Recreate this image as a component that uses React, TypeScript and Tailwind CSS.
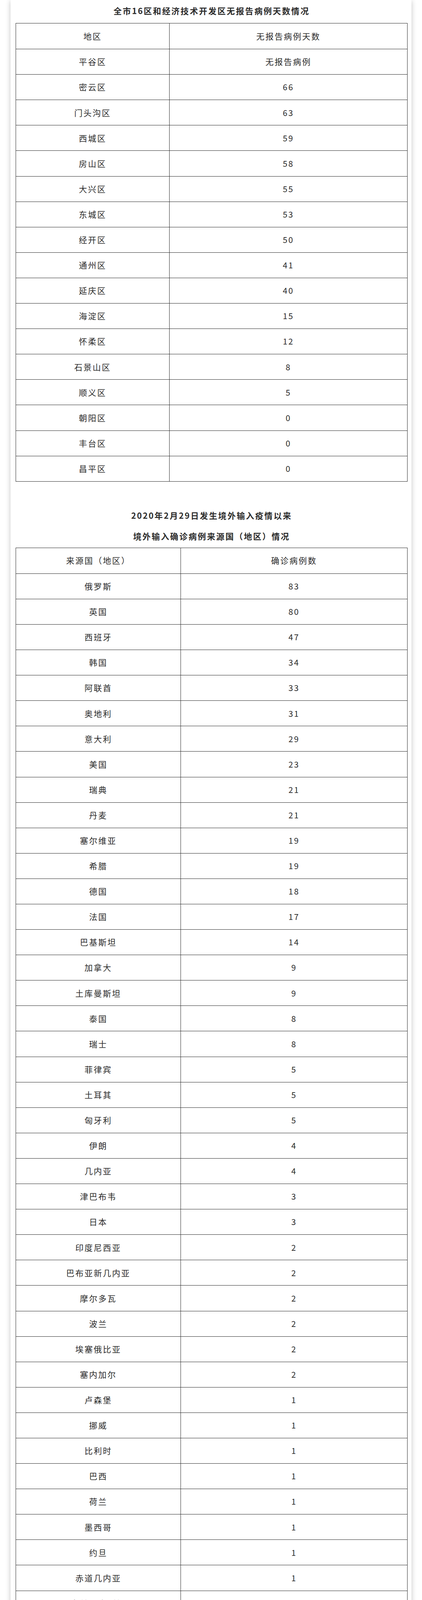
/**
 * Beijing district / imported case statistics page
 */

import React from 'react';

type Row = [string, string];

const districts: Array<Row> = [
    [`平谷区`, `无报告病例`],
    [`密云区`, `66`],
    [`门头沟区`, `63`],
    [`西城区`, `59`],
    [`房山区`, `58`],
    [`大兴区`, `55`],
    [`东城区`, `53`],
    [`经开区`, `50`],
    [`通州区`, `41`],
    [`延庆区`, `40`],
    [`海淀区`, `15`],
    [`怀柔区`, `12`],
    [`石景山区`, `8`],
    [`顺义区`, `5`],
    [`朝阳区`, `0`],
    [`丰台区`, `0`],
    [`昌平区`, `0`],
];

const sources: Array<Row> = [
    [`俄罗斯`, `83`],
    [`英国`, `80`],
    [`西班牙`, `47`],
    [`韩国`, `34`],
    [`阿联酋`, `33`],
    [`奥地利`, `31`],
    [`意大利`, `29`],
    [`美国`, `23`],
    [`瑞典`, `21`],
    [`丹麦`, `21`],
    [`塞尔维亚`, `19`],
    [`希腊`, `19`],
    [`德国`, `18`],
    [`法国`, `17`],
    [`巴基斯坦`, `14`],
    [`加拿大`, `9`],
    [`土库曼斯坦`, `9`],
    [`泰国`, `8`],
    [`瑞士`, `8`],
    [`菲律宾`, `5`],
    [`土耳其`, `5`],
    [`匈牙利`, `5`],
    [`伊朗`, `4`],
    [`几内亚`, `4`],
    [`津巴布韦`, `3`],
    [`日本`, `3`],
    [`印度尼西亚`, `2`],
    [`巴布亚新几内亚`, `2`],
    [`摩尔多瓦`, `2`],
    [`波兰`, `2`],
    [`埃塞俄比亚`, `2`],
    [`塞内加尔`, `2`],
    [`卢森堡`, `1`],
    [`挪威`, `1`],
    [`比利时`, `1`],
    [`巴西`, `1`],
    [`荷兰`, `1`],
    [`墨西哥`, `1`],
    [`约旦`, `1`],
    [`赤道几内亚`, `1`],
    [`乌兹别克斯坦`, `1`],
    [`新加坡`, `1`],
    [`塔吉克斯坦`, `1`],
    [`赞比亚`, `1`],
    [`伊拉克`, `1`],
    [`南非`, `1`],
    [`毛里求斯`, `1`],
    [`孟加拉国`, `1`],
    [`埃及`, `1`],
    [`喀麦隆`, `1`],
    [`刚果（金）`, `1`],
    [`塞浦路斯`, `1`],
    [`中国香港`, `274`],
    [`中国台湾`, `53`],
    [`合计`, `911`],
];

const notice = `请与官方公布的病例活动轨迹有交集人员，海南、西藏、新疆等风险地区进返京人员，接到电话、短信、健康宝弹窗、健康宝黄码或红码提示风险人员，立即主动向社区、单位、宾馆等报告，配合做好集中隔离、居家隔离、健康监测、核酸检测等各项防控措施；如接到社区或疾控中心通知为风险人员，要如实报告个人信息和行程轨迹，不外出，不接待来访亲友，配合落实各项防控措施。居家隔离、居家健康监测及其同住人员，要严格居家、足不出户，一旦出现发热、干咳等症状，立即报告社区，配合相应管控措施。`;

interface StatTableProps {
    head: Row
    rows: Array<Row>
    cols: string
}

function StatTable({ head, rows, cols }: StatTableProps): React.ReactElement {
    const all = [head, ...rows];
    return (
        <div className="w-[1003px] border border-[#2a2a2a]">
            {all.map(([name, value], i) => (
                <div
                    key={name}
                    className={i === 0
                        ? `grid ${cols} h-[65.1px]`
                        : `grid ${cols} h-[65.1px] border-t border-[#2a2a2a]`}
                >
                    <div className="flex items-center justify-center border-r border-[#2a2a2a]">
                        {name}
                    </div>
                    <div className="flex items-center justify-center">
                        {value}
                    </div>
                </div>
            ))}
        </div>
    );
}

export default function App(): React.ReactElement {
    return (
        <div className="overflow-hidden bg-white px-[27px] pb-[24px] font-['Noto_Sans_CJK_SC',sans-serif] text-[#2b2b2b]">
            <div className="relative rounded-b-[28px] bg-white pl-[13px] pr-[10px] pt-[9px] pb-[55px] shadow-[0_2px_14px_rgba(0,0,0,0.24)]">
                <h2 className="text-center text-[21px] font-bold leading-[36px] tracking-[2.6px]">
                    全市16区和经济技术开发区无报告病例天数情况
                </h2>

                <div className="mt-[14px] text-[21px] tracking-[2.5px]">
                    <StatTable
                        head={[`地区`, `无报告病例天数`]}
                        rows={districts}
                        cols="grid-cols-[393px_1fr]"
                    />
                </div>

                <div className="mt-[68px] flex flex-col gap-[17px] text-center text-[21px] font-bold leading-[36px] tracking-[2.6px]">
                    <p>2020年2月29日发生境外输入疫情以来</p>
                    <p>境外输入确诊病例来源国（地区）情况</p>
                </div>

                <div className="mt-[12px] text-[21px] tracking-[2.5px]">
                    <StatTable
                        head={[`来源国（地区）`, `确诊病例数`]}
                        rows={sources}
                        cols="grid-cols-[422px_1fr]"
                    />
                </div>

                <div className="mt-[72px] w-[1003px] border-2 border-dashed border-[#c5cdd8] bg-[#ebebeb] px-[17px] py-[16px]">
                    <p className="text-justify text-[24px] leading-[36.7px] tracking-[1.1px] text-[#363636] [text-spacing-trim:space-all]">
                        {notice}
                    </p>
                </div>
            </div>
        </div>
    );
}
